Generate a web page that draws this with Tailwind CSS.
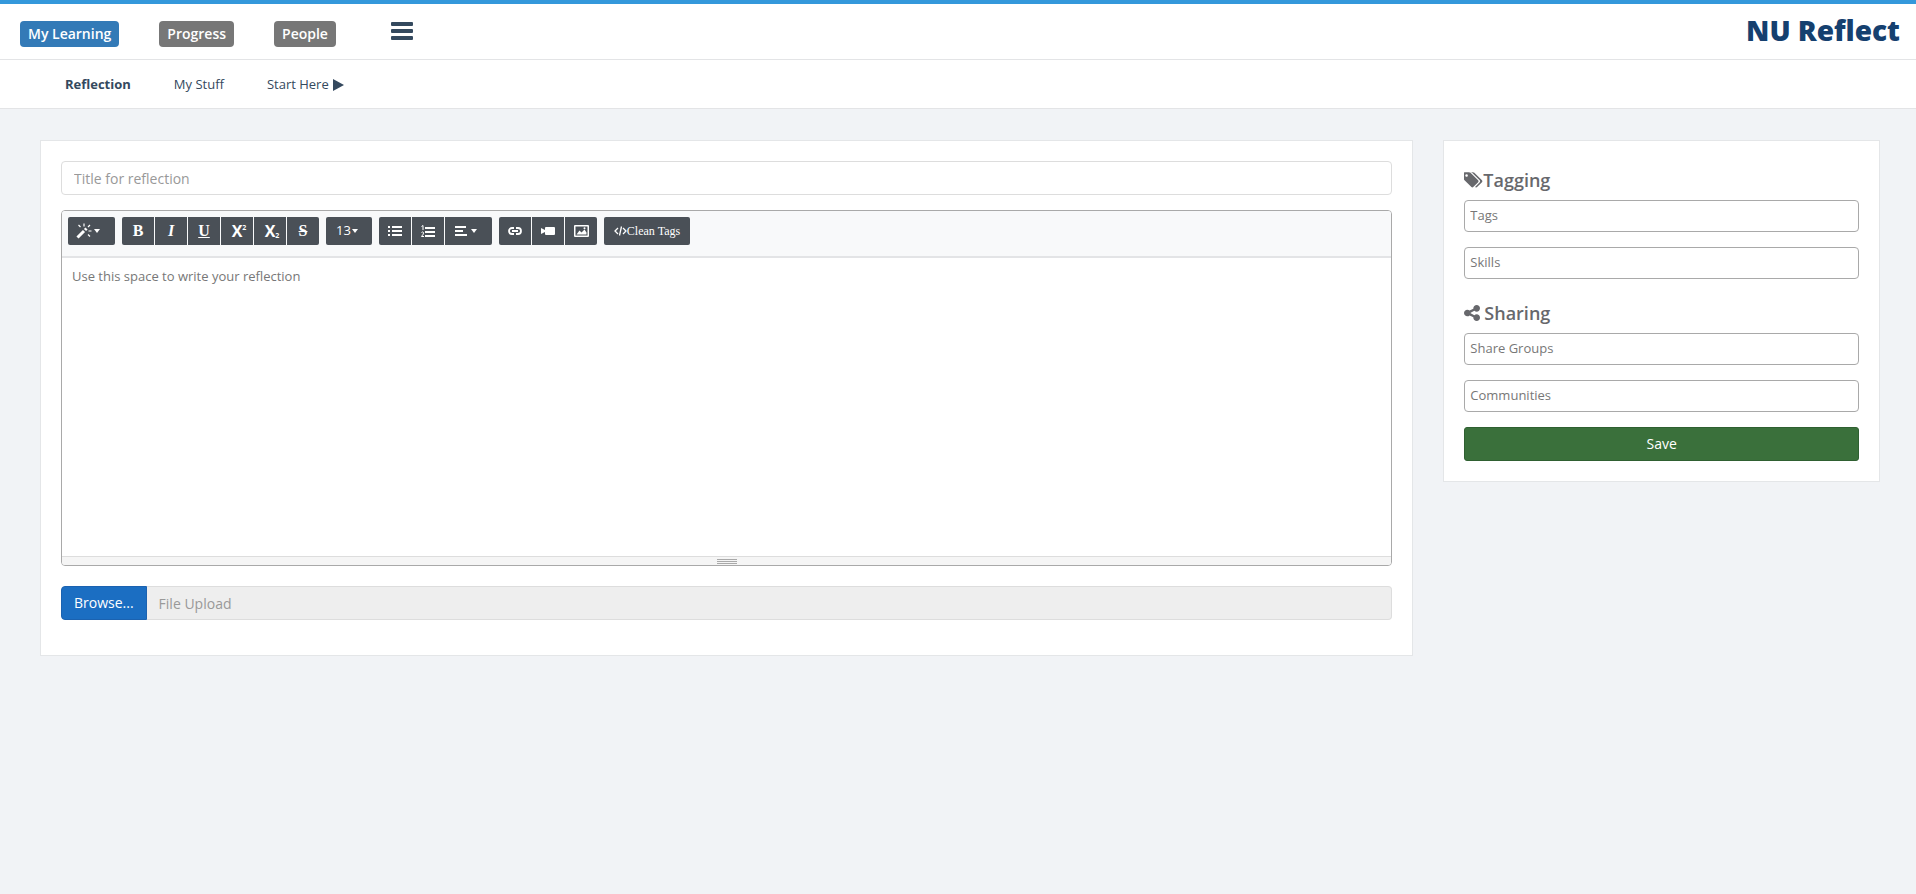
<!DOCTYPE html>
<html lang="en">
<head>
<meta charset="utf-8">
<title>NU Reflect</title>
<script src="https://cdn.jsdelivr.net/npm/@tailwindcss/browser@4"></script>
</head>
<body class="min-h-screen bg-[#f1f3f6] font-['Open_Sans',sans-serif] text-[13px] text-[#34495e]">
<header class="border-t-4 border-[#3498db] bg-white">
  <div class="flex h-14 items-start justify-between border-b border-[#e3e4e6] pr-4 pl-5">
    <nav aria-label="Main" class="flex items-start gap-10 pt-[17px] text-sm font-semibold text-white">
      <a href="#" class="rounded bg-[#337ab7] px-2 leading-[26px]">My Learning</a>
      <a href="#" class="rounded bg-[#777] px-2 leading-[26px]">Progress</a>
      <a href="#" class="rounded bg-[#777] px-2 leading-[26px]">People</a>
      <button type="button" aria-label="Menu" class="ml-[13px] text-[#34495e]">
        <svg class="h-[22px] w-[26px]" viewBox="0 0 26 22" fill="currentColor"><rect x="2" y="1" width="22" height="4" rx="1"/><rect x="2" y="8" width="22" height="4" rx="1"/><rect x="2" y="15" width="22" height="4" rx="1"/></svg>
      </button>
    </nav>
    <a href="#" class="pt-2 font-['Open_Sans',sans-serif] text-[28px] leading-9 font-extrabold text-[#15406f]">NU Reflect</a>
  </div>
  <nav aria-label="Section" class="flex h-[49px] items-center gap-[43px] border-b border-[#e3e4e6] pt-0.5 pl-[65px]">
    <a href="#" class="font-bold">Reflection</a>
    <a href="#">My Stuff</a>
    <a href="#" class="flex items-center gap-1">Start Here
      <svg class="h-3 w-[11px]" viewBox="0 0 11 12" fill="currentColor"><path d="M0 0l11 6L0 12z"/></svg></a>
  </nav>
</header>

<main class="grid grid-cols-[3.145fr_1fr] items-start gap-[30px] pt-[31px] pr-9 pb-10 pl-10">
  <form class="min-w-0 border border-[#e4e6e8] bg-white px-5 pt-5 pb-[35px]">
    <input type="text" aria-label="Title for reflection" placeholder="Title for reflection" class="block h-[34px] w-full rounded border border-[#ddd] px-3 text-sm placeholder:text-[#999]">

    <div class="mt-[15px] overflow-hidden rounded border border-[#a9a9a9]">
      <div class="flex flex-wrap gap-[7px] border-b-2 border-[#e3e4e6] bg-[#f8f9fa] px-1.5 pt-1.5 pb-[11px] text-white">
        <button type="button" aria-label="Style" class="flex h-7 w-[47px] items-center gap-0.5 rounded-xs bg-[#4a5057] pl-2">
          <svg class="h-4 w-4" viewBox="0 0 16 16" fill="none" stroke="currentColor"><path d="M1.500 14.500L8 8" stroke-width="3"/><path d="M9 7l1.500-1.500" stroke-width="3"/><path d="M8 .5v3M2.500 2l2 2M14 2l-2 2M12.500 8h3M12 11.500l2 2" stroke-width="1.200"/></svg>
          <svg class="h-1 w-1.5" viewBox="0 0 6 4" fill="currentColor"><path d="M0 0h6L3 4z"/></svg>
        </button>
        <div class="flex gap-px overflow-hidden rounded-xs font-['Liberation_Serif',serif] text-base font-bold">
          <button type="button" aria-label="Bold" class="h-7 w-8 bg-[#4a5057]">B</button>
          <button type="button" aria-label="Italic" class="h-7 w-8 bg-[#4a5057] italic">I</button>
          <button type="button" aria-label="Underline" class="h-7 w-8 bg-[#4a5057] underline">U</button>
          <button type="button" aria-label="Superscript" class="flex h-7 w-8 items-center justify-center bg-[#4a5057] pl-1 font-['Open_Sans',sans-serif] leading-none"><span>X</span><span class="pb-2 text-[7px]">2</span></button>
          <button type="button" aria-label="Subscript" class="flex h-7 w-8 items-center justify-center bg-[#4a5057] pl-1 font-['Open_Sans',sans-serif] leading-none"><span>X</span><span class="pt-2 text-[7px]">2</span></button>
          <button type="button" aria-label="Strikethrough" class="h-7 w-8 bg-[#4a5057] line-through">S</button>
        </div>
        <button type="button" aria-label="Font size" class="flex h-7 w-[46px] items-center gap-px rounded-xs bg-[#4a5057] pl-2.5">13
          <svg class="h-1 w-1.5" viewBox="0 0 6 4" fill="currentColor"><path d="M0 0h6L3 4z"/></svg>
        </button>
        <div class="flex gap-px overflow-hidden rounded-xs">
          <button type="button" aria-label="Unordered list" class="grid h-7 w-8 place-items-center bg-[#4a5057]"><svg class="h-3 w-[14px]" viewBox="0 0 14 12" fill="currentColor"><path d="M0 1h2v2H0zM0 5h2v2H0zM0 9h2v2H0zM4 1h10v2H4zM4 5h10v2H4zM4 9h10v2H4z"/></svg></button>
          <button type="button" aria-label="Ordered list" class="grid h-7 w-8 place-items-center bg-[#4a5057]"><svg class="h-3 w-[14px]" viewBox="0 0 14 12" fill="currentColor"><path d="M4 2h10v2H4zM4 6h10v2H4zM4 10h10v2H4z"/><path d="M.5 1.500L2 .5V5M.5 7.500q1.500-1.200 2 0T.5 11.500H3" fill="none" stroke="currentColor"/></svg></button>
          <button type="button" aria-label="Paragraph" class="flex h-7 w-[47px] items-center gap-1 bg-[#4a5057] pl-2.5"><svg class="h-3 w-3" viewBox="0 0 12 12" fill="currentColor"><path d="M0 1h11v2H0zM0 5h8v2H0zM0 9h12v2H0z"/></svg>
          <svg class="h-1 w-1.5" viewBox="0 0 6 4" fill="currentColor"><path d="M0 0h6L3 4z"/></svg></button>
        </div>
        <div class="flex gap-px overflow-hidden rounded-xs">
          <button type="button" aria-label="Link" class="grid h-7 w-8 place-items-center bg-[#4a5057]"><svg class="h-2 w-[14px]" viewBox="0 0 14 8" fill="none" stroke="currentColor" stroke-width="1.800"><path d="M6 1H4a3 3 0 0 0 0 6h2M8 1h2a3 3 0 0 1 0 6H8M4 4h6"/></svg></button>
          <button type="button" aria-label="Video" class="grid h-7 w-8 place-items-center bg-[#4a5057]"><svg class="h-2 w-[14px]" viewBox="0 0 14 8" fill="currentColor"><path d="M0 1l4 2V1q0-1 1-1h8q1 0 1 1v6q0 1-1 1H5q-1 0-1-1V5L0 7z"/></svg></button>
          <button type="button" aria-label="Picture" class="grid h-7 w-8 place-items-center bg-[#4a5057]"><svg class="h-3 w-[15px]" viewBox="0 0 15 12" fill="currentColor"><path fill-rule="evenodd" d="M0 1q0-1 1-1h13q1 0 1 1v10q0 1-1 1H1q-1 0-1-1zM1.500 1.500v9h12v-9z"/><path d="M2.500 9.500L5.500 5.500 7.500 7.500 10.500 4.500 12.500 7.500V9.500z"/><circle cx="10.500" cy="3.200" r="1"/></svg></button>
        </div>
        <button type="button" class="flex h-7 w-[86px] items-center justify-center rounded-xs bg-[#4a5057] font-['Liberation_Serif',serif] text-xs"><svg class="h-3 w-[13px]" viewBox="0 0 13 12" fill="none" stroke="currentColor" stroke-width="1.300" aria-hidden="true"><path d="M4 3L1 6l3 3M9 3l3 3-3 3M7.500 1.500l-2 9"/></svg>Clean Tags</button>
      </div>
      <textarea aria-label="Reflection" placeholder="Use this space to write your reflection" class="block h-[298px] w-full resize-none bg-white px-2.5 py-[9px] leading-[18px] placeholder:text-[#777]"></textarea>
      <div class="flex h-[9px] flex-col items-center gap-px border-t border-[#ddd] bg-[#f5f5f5] pt-0.5">
        <span class="h-px w-5 bg-[#a9a9a9]"></span>
        <span class="h-px w-5 bg-[#a9a9a9]"></span>
        <span class="h-px w-5 bg-[#a9a9a9]"></span>
      </div>
    </div>

    <div class="mt-5 flex text-sm">
      <button type="button" class="h-[34px] rounded-l border border-[#1b62b0] bg-[#1b6ec2] px-3 text-white">Browse...</button>
      <input type="text" readonly aria-label="File Upload" placeholder="File Upload" class="h-[34px] min-w-0 flex-1 rounded-r border border-l-0 border-[#ddd] bg-[#eee] px-3 placeholder:text-[#999]">
    </div>
  </form>

  <aside class="min-w-0 border border-[#e4e6e8] bg-white px-5 pb-5">
    <h2 class="mt-5 flex h-[39px] items-center pb-0.5 text-lg font-semibold text-[#67686c]">
      <svg class="h-[18px] w-[19px]" viewBox="0 0 1900 1792" fill="currentColor"><path d="M384 448q0-53-37.500-90.500t-90.500-37.500-90.500 37.500-37.500 90.500 37.500 90.500 90.500 37.500 90.500-37.500 37.500-90.500zm1067 576q0 53-37 90l-491 492q-39 37-91 37-53 0-90-37l-715-716q-38-37-64.500-101t-26.500-117v-416q0-52 38-90t90-38h416q53 0 117 26.500t102 64.500l715 714q37 39 37 91zm384 0q0 53-37 90l-491 492q-39 37-91 37-36 0-59-14t-53-45l470-470q37-37 37-90 0-52-37-91l-715-714q-38-38-102-64.500t-117-26.500h224q53 0 117 26.500t102 64.500l715 714q37 39 37 91z"/></svg>Tagging</h2>
    <div class="flex flex-col gap-[15px]">
      <input type="text" aria-label="Tags" placeholder="Tags" class="h-8 rounded border border-[#a9a9a9] px-[5px] pb-0.5 placeholder:text-[#777]">
      <input type="text" aria-label="Skills" placeholder="Skills" class="h-8 rounded border border-[#a9a9a9] px-[5px] pb-0.5 placeholder:text-[#777]">
    </div>
    <h2 class="mt-[15px] flex h-[39px] items-center gap-1 pb-0.5 text-lg font-semibold text-[#67686c]">
      <svg class="h-4 w-4" viewBox="128 128 1536 1536" fill="currentColor"><path d="M1344 1024q133 0 226.500 93.500t93.500 226.500-93.500 226.500-226.500 93.500-226.500-93.500-93.500-226.500q0-12 2-34l-360-180q-92 86-218 86-133 0-226.500-93.500t-93.500-226.500 93.500-226.500 226.500-93.500q126 0 218 86l360-180q-2-22-2-34 0-133 93.500-226.500t226.500-93.500 226.500 93.500 93.500 226.500-93.500 226.500-226.500 93.500q-126 0-218-86l-360 180q2 22 2 34t-2 34l360 180q92-86 218-86z"/></svg>Sharing</h2>
    <div class="flex flex-col gap-[15px]">
      <input type="text" aria-label="Share Groups" placeholder="Share Groups" class="h-8 rounded border border-[#a9a9a9] px-[5px] pb-0.5 placeholder:text-[#777]">
      <input type="text" aria-label="Communities" placeholder="Communities" class="h-8 rounded border border-[#a9a9a9] px-[5px] pb-0.5 placeholder:text-[#777]">
      <button type="submit" class="h-[34px] rounded-[3px] border border-[#2f6031] bg-[#3a703b] text-sm text-white">Save</button>
    </div>
  </aside>
</main>
</body>
</html>
